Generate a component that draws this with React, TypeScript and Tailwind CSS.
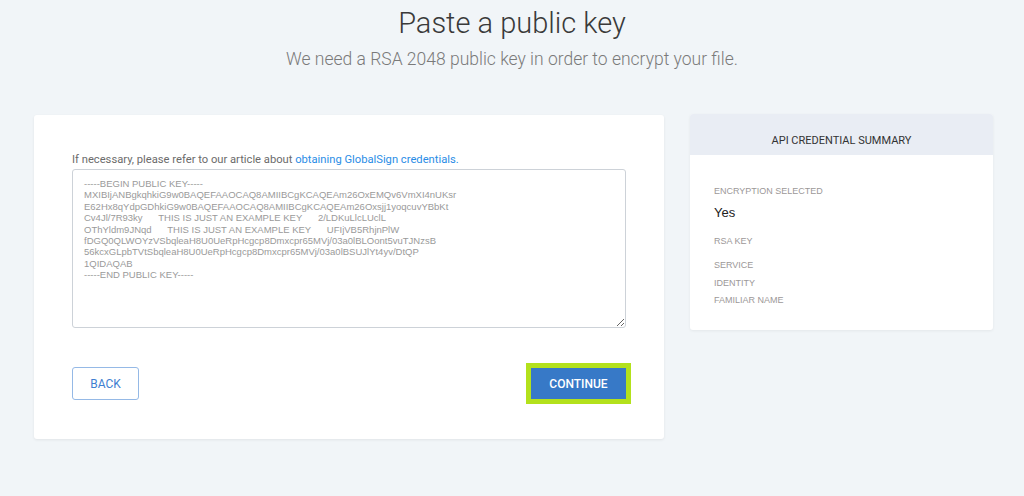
const PUBLIC_KEY = `-----BEGIN PUBLIC KEY-----
MXIBIjANBgkqhkiG9w0BAQEFAAOCAQ8AMIIBCgKCAQEAm26OxEMQv6VmXI4nUKsr
E62Hx8qYdpGDhkiG9w0BAQEFAAOCAQ8AMIIBCgKCAQEAm26Oxsjj1yoqcuvYBbKt
Cv4Jl/7R93ky      THIS IS JUST AN EXAMPLE KEY      2/LDKuLlcLUclL
OThYldm9JNqd      THIS IS JUST AN EXAMPLE KEY      UFIjVB5RhjnPlW
fDGQ0QLWOYzVSbqleaH8U0UeRpHcgcp8Dmxcpr65MVj/03a0lBLOont5vuTJNzsB
56kcxGLpbTVtSbqleaH8U0UeRpHcgcp8Dmxcpr65MVj/03a0lBSUJlYt4yv/DtQP
1QIDAQAB
-----END PUBLIC KEY-----`;

const labelCls =
  "text-[9px] leading-[12px] text-[#9c9898] uppercase font-['Liberation_Sans',Arial,sans-serif]";

const Summary = () => (
  <div className="-mt-px w-[303px] self-start rounded-[3px] bg-white shadow-[0_1px_3px_rgba(0,0,0,0.06)] overflow-hidden">
    <div className="h-[41px] bg-[#e9edf4] flex items-end justify-center pb-[7px]">
      <span className="text-[11px] leading-[14px] text-[#333]">API CREDENTIAL SUMMARY</span>
    </div>
    <div className="pl-6 pt-[30px] pb-[24px]">
      <p className={labelCls}>Encryption selected</p>
      <p className="mt-2 text-[13px] leading-[16px] text-[#222] font-['Liberation_Sans',Arial,sans-serif]">
        Yes
      </p>
      <p className={`${labelCls} mt-[14px]`}>RSA key</p>
      <p className={`${labelCls} mt-3`}>Service</p>
      <p className={`${labelCls} mt-[6px]`}>Identity</p>
      <p className={`${labelCls} mt-[5px]`}>Familiar name</p>
    </div>
  </div>
);

export default function App() {
  return (
    <div className="h-[496px] bg-[#f1f5f8] font-['Roboto',sans-serif] overflow-hidden">
      <div className="pt-[5px] text-center">
        <h1 className="text-[29px] leading-[36px] font-light text-[#3a3a3a]">Paste a public key</h1>
        <p className="mt-[7px] text-[17.5px] leading-[22px] font-light text-[#7a7a7a]">
          We need a RSA 2048 public key in order to encrypt your file.
        </p>
      </div>

      <div className="mt-[45px] flex gap-[26px] pl-[34px]">
        <div className="w-[630px] rounded-[3px] bg-white shadow-[0_1px_3px_rgba(0,0,0,0.07)] px-[38px] pt-[37px] pb-[35px]">
          <p className="text-[11.2px] leading-[16px] text-[#6b6b6b]">
            If necessary, please refer to our article about{" "}
            <a href="#" className="text-[#2a8de6]">
              obtaining GlobalSign credentials.
            </a>
          </p>
          <textarea
            defaultValue={PUBLIC_KEY}
            spellCheck={false}
            className="mt-px block w-full h-[159px] rounded-[3px] border border-[#cdd2d8] pt-2 pl-[11px] pr-2 text-[9.5px] leading-[11.4px] text-[#9a9a9a] font-['Liberation_Sans',Arial,sans-serif] outline-none"
          />
          <div className="mt-[35px] flex items-center justify-between">
            <button className="w-[67px] h-[33px] rounded-[3px] border border-[#95b9e6] text-[12px] text-[#3f7fd1]">
              BACK
            </button>
            <button className="my-[5px] w-[95px] h-[31px] bg-[#3779c7] text-[12px] font-medium text-white ring-[5px] ring-[#b3e11c]">
              CONTINUE
            </button>
          </div>
        </div>
        <Summary />
      </div>
    </div>
  );
}
